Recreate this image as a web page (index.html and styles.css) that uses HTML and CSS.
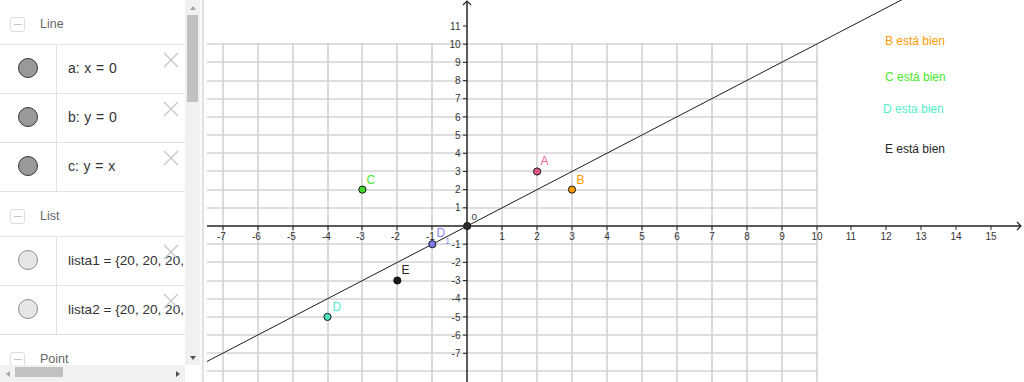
FILE: index.html
```html
<!DOCTYPE html>
<html lang="es">
<head>
<meta charset="utf-8">
<title>GeoGebra</title>
<link rel="stylesheet" href="styles.css">
</head>
<body>
<div class="app">
  <aside class="algebra">
    <div class="av-scroll">
      <div class="group-head"><span class="toggle"></span><span class="group-title">Line</span></div>
      <div class="item">
        <div class="marble-cell"><span class="marble"></span></div>
        <div class="item-body">a: x = 0</div>
        <svg class="close" viewBox="0 0 16 16"><path d="M1 1L15 15M15 1L1 15"/></svg>
      </div>
      <div class="item">
        <div class="marble-cell"><span class="marble"></span></div>
        <div class="item-body">b: y = 0</div>
        <svg class="close" viewBox="0 0 16 16"><path d="M1 1L15 15M15 1L1 15"/></svg>
      </div>
      <div class="item">
        <div class="marble-cell"><span class="marble"></span></div>
        <div class="item-body">c: y = x</div>
        <svg class="close" viewBox="0 0 16 16"><path d="M1 1L15 15M15 1L1 15"/></svg>
      </div>
      <div class="group-head"><span class="toggle"></span><span class="group-title">List</span></div>
      <div class="item">
        <div class="marble-cell"><span class="marble off"></span></div>
        <div class="item-body list-text">lista1 = {20, 20, 20,</div>
        <svg class="close" viewBox="0 0 16 16"><path d="M1 1L15 15M15 1L1 15"/></svg>
      </div>
      <div class="item">
        <div class="marble-cell"><span class="marble off"></span></div>
        <div class="item-body list-text">lista2 = {20, 20, 20,</div>
        <svg class="close" viewBox="0 0 16 16"><path d="M1 1L15 15M15 1L1 15"/></svg>
      </div>
      <div class="group-head"><span class="toggle"></span><span class="group-title">Point</span></div>
    </div>
    <div class="vbar">
      <div class="sb-btn"><span class="arr up"></span></div>
      <div class="vtrack"><div class="vthumb"></div></div>
      <div class="sb-btn"><span class="arr down"></span></div>
    </div>
    <div class="hbar">
      <div class="sb-btn"><span class="arr left"></span></div>
      <div class="htrack"><div class="hthumb"></div></div>
      <div class="sb-btn"><span class="arr right"></span></div>
    </div>
    <div class="corner"></div>
  </aside>
  <div class="splitter"></div>
  <main class="canvas">
    <svg class="plot" width="817" height="382" viewBox="0 0 817 382">
      <g transform="translate(-207 0)">
        <path class="grid" d="M223 43V382M258 43V382M293 43V382M328 43V382M362 43V382M397 43V382M432 43V382M502 43V382M537 43V382M572 43V382M607 43V382M642 43V382M677 43V382M712 43V382M747 43V382M782 43V382M817 43V382
        M207 44H818M207 62H818M207 81H818M207 99H818M207 117H818M207 135H818M207 153H818M207 171H818M207 190H818M207 208H818M207 244H818M207 262H818M207 281H818M207 299H818M207 317H818M207 335H818M207 353H818M207 371H818"/>
        <path class="axis" d="M467 1V382M207 226H1021"/>
        <path class="arrow" d="M463 5L467 1L471 5M1017 222L1021 226L1017 230"/>
        <path class="tick" d="M223 226V230M258 226V230M293 226V230M328 226V230M362 226V230M397 226V230M432 226V230M502 226V230M537 226V230M572 226V230M607 226V230M642 226V230M677 226V230M712 226V230M747 226V230M782 226V230M817 226V230M851 226V230M886 226V230M921 226V230M956 226V230M991 226V230
        M463 26H467M463 44.2H467M463 62.4H467M463 80.6H467M463 98.7H467M463 116.9H467M463 135.1H467M463 153.3H467M463 171.5H467M463 189.6H467M463 207.8H467M463 244.2H467M463 262.4H467M463 280.5H467M463 298.7H467M463 316.9H467M463 335.1H467M463 353.3H467"/>
        <g class="ax end">
          <text x="225.8" y="240">-7</text>
          <text x="260.8" y="240">-6</text>
          <text x="295.8" y="240">-5</text>
          <text x="330.8" y="240">-4</text>
          <text x="364.8" y="240">-3</text>
          <text x="399.8" y="240">-2</text>
          <text x="434.8" y="240">-1</text>
        </g>
        <g class="ax mid">
          <text x="502" y="240">1</text>
          <text x="537" y="240">2</text>
          <text x="572" y="240">3</text>
          <text x="607" y="240">4</text>
          <text x="642" y="240">5</text>
          <text x="677" y="240">6</text>
          <text x="712" y="240">7</text>
          <text x="747" y="240">8</text>
          <text x="782" y="240">9</text>
          <text x="817" y="240">10</text>
          <text x="851" y="240">11</text>
          <text x="886" y="240">12</text>
          <text x="921" y="240">13</text>
          <text x="956" y="240">14</text>
          <text x="991" y="240">15</text>
        </g>
        <g class="ax end">
          <text x="460.5" y="29.6">11</text>
          <text x="460.5" y="47.8">10</text>
          <text x="460.5" y="66">9</text>
          <text x="460.5" y="84.2">8</text>
          <text x="460.5" y="102.3">7</text>
          <text x="460.5" y="120.5">6</text>
          <text x="460.5" y="138.7">5</text>
          <text x="460.5" y="156.9">4</text>
          <text x="460.5" y="175.1">3</text>
          <text x="460.5" y="193.2">2</text>
          <text x="460.5" y="211.4">1</text>
          <text x="460.5" y="247.8">-1</text>
          <text x="460.5" y="266">-2</text>
          <text x="460.5" y="284.1">-3</text>
          <text x="460.5" y="302.3">-4</text>
          <text x="460.5" y="320.5">-5</text>
          <text x="460.5" y="338.7">-6</text>
          <text x="460.5" y="356.9">-7</text>
        </g>
        <path class="line" d="M200 365.1L905 -1.9"/>
        <circle class="pt pt-a" cx="537.1" cy="171.5" r="3.6"/>
        <circle class="pt pt-b" cx="572" cy="189.6" r="3.6"/>
        <circle class="pt pt-c" cx="362.4" cy="189.6" r="3.6"/>
        <circle class="pt pt-d1" cx="432.3" cy="244.2" r="3.6"/>
        <circle class="pt pt-e" cx="397.3" cy="280.5" r="3.6"/>
        <circle class="pt pt-d" cx="327.5" cy="316.9" r="3.6"/>
        <circle class="pt pt-o" cx="467.2" cy="226" r="3.6"/>
        <text class="lbl c-a" x="540.5" y="165">A</text>
        <text class="lbl c-b" x="576.5" y="184">B</text>
        <text class="lbl c-c" x="366.5" y="184">C</text>
        <text class="lbl c-e" x="401.5" y="274.3">E</text>
        <text class="lbl c-d" x="332.5" y="311">D</text>
        <text class="lbl c-d1" x="436.5" y="237.3">D<tspan class="sub" y="243.5">1</tspan></text>
        <text class="lbl-o" x="471.5" y="219.5">o</text>
        <text class="msg c-b" x="885" y="44.5">B está bien</text>
        <text class="msg c-c" x="885" y="81">C está bien</text>
        <text class="msg c-d" x="883" y="113">D esta bien</text>
        <text class="msg c-e" x="885" y="153.3">E está bien</text>
      </g>
    </svg>
  </main>
</div>
</body>
</html>
```

FILE: styles.css
```css
* { box-sizing: border-box; }

html, body {
  margin: 0;
  padding: 0;
  width: 1024px;
  height: 382px;
  overflow: hidden;
  background: #fff;
  font-family: "Liberation Sans", Arial, sans-serif;
}

.app {
  display: flex;
  width: 1024px;
  height: 382px;
}

/* ---------- Algebra view ---------- */
.algebra {
  width: 200px;
  flex: none;
  display: grid;
  grid-template-columns: 185px 15px;
  grid-template-rows: 365px 17px;
}

.av-scroll {
  grid-column: 1;
  grid-row: 1;
  overflow: hidden;
}

.group-head {
  height: 45px;
  padding-top: 4px;
  border-bottom: 1px solid #e3e3e3;
  display: flex;
  align-items: center;
}

.toggle {
  width: 15px;
  height: 15px;
  margin-left: 10px;
  border: 1px solid #dedede;
  border-radius: 3px;
  display: flex;
  align-items: center;
  justify-content: center;
}

.toggle::after {
  content: "";
  width: 8px;
  height: 1px;
  background: #c4c4c4;
}

.group-title {
  margin-left: 15px;
  font-size: 12.5px;
  color: #666;
}

.item {
  position: relative;
  height: 49px;
  border-bottom: 1px solid #e3e3e3;
  display: flex;
}

.marble-cell {
  width: 57px;
  flex: none;
  border-right: 1px solid #e3e3e3;
  display: flex;
  align-items: center;
  justify-content: center;
  padding-bottom: 3px;
}

.marble {
  width: 20px;
  height: 20px;
  border-radius: 50%;
  border: 1px solid #353535;
  background: #999;
}

.marble.off {
  background: #e6e6e6;
  border-color: #8c8c8c;
}

.item-body {
  flex: 1;
  min-width: 0;
  padding-left: 11px;
  padding-bottom: 2px;
  display: flex;
  align-items: center;
  white-space: nowrap;
  overflow: hidden;
  font-size: 14px;
  word-spacing: 0.8px;
  color: #333;
}

.item-body.list-text {
  font-size: 13.6px;
  word-spacing: 0;
}

.close {
  position: absolute;
  top: 7px;
  right: 6px;
  width: 16px;
  height: 16px;
  fill: none;
  stroke: #c8c8c8;
  stroke-width: 1.4;
}

/* ---------- scrollbars ---------- */
.vbar {
  grid-column: 2;
  grid-row: 1;
  background: #f1f1f1;
  display: flex;
  flex-direction: column;
}

.sb-btn {
  flex: none;
  width: 15px;
  height: 15px;
  display: flex;
  align-items: center;
  justify-content: center;
}

.vtrack {
  flex: 1;
  padding: 0 2px;
}

.vthumb {
  height: 87px;
  background: #c1c1c1;
}

.hbar {
  grid-column: 1;
  grid-row: 2;
  background: #f1f1f1;
  display: flex;
}

.hbar .sb-btn {
  height: 17px;
}

.htrack {
  flex: 1;
  padding-top: 2px;
}

.hthumb {
  width: 48px;
  height: 10px;
  background: #c1c1c1;
}

.corner {
  grid-column: 2;
  grid-row: 2;
  background: #fff;
}

.arr {
  width: 0;
  height: 0;
  border-style: solid;
}

.arr.up {
  border-width: 0 3.5px 4px 3.5px;
  border-color: transparent transparent #a3a3a3 transparent;
}

.arr.down {
  border-width: 4px 3.5px 0 3.5px;
  border-color: #505050 transparent transparent transparent;
}

.arr.left {
  border-width: 3.5px 4px 3.5px 0;
  border-color: transparent #a3a3a3 transparent transparent;
}

.arr.right {
  border-width: 3.5px 0 3.5px 4px;
  border-color: transparent transparent transparent #505050;
}

/* ---------- splitter ---------- */
.splitter {
  width: 7px;
  flex: none;
  background: linear-gradient(to right, #fafafa 0 2px, #e2e2e2 2px 4px, #fff 4px 7px);
}

/* ---------- graphics view ---------- */
.canvas {
  flex: 1;
  overflow: hidden;
}

.plot {
  display: block;
  font-family: "Liberation Sans", Arial, sans-serif;
}

.grid {
  fill: none;
  stroke: #d3d3d3;
  stroke-width: 1.6;
}

.axis {
  fill: none;
  stroke: #252525;
  stroke-width: 1.5;
}

.arrow {
  fill: none;
  stroke: #252525;
  stroke-width: 1.2;
}

.tick {
  fill: none;
  stroke: #252525;
  stroke-width: 1;
}

.ax {
  font-size: 10px;
  fill: #333;
}

.ax.end { text-anchor: end; }
.ax.mid { text-anchor: middle; }

.line {
  fill: none;
  stroke: #1e1e1e;
  stroke-width: 1;
}

.pt {
  stroke: #1a1a1a;
  stroke-width: 1;
}

.pt-a { fill: #e4558a; }
.pt-b { fill: #ff9900; }
.pt-c { fill: #44d62c; }
.pt-d1 { fill: #7b7bef; }
.pt-e { fill: #1a1a1a; }
.pt-d { fill: #4ce0bf; }
.pt-o { fill: #2a2a2a; }

.lbl {
  font-size: 12px;
}

.lbl .sub {
  font-size: 8.5px;
}

.lbl-o {
  font-size: 10px;
  fill: #444;
}

.msg {
  font-size: 12px;
}

.c-a { fill: #ee6596; }
.c-b { fill: #ff9900; }
.c-c { fill: #48e82a; }
.c-d { fill: #52efc9; }
.c-d1 { fill: #8a8aff; }
.c-e { fill: #262626; }
```
